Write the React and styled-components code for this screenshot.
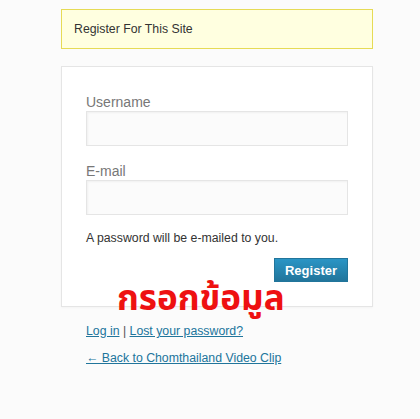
import React from 'react';
import styled, { createGlobalStyle } from 'styled-components';

const GlobalStyle = createGlobalStyle`
  html, body {
    margin: 0;
    padding: 0;
    background: #fbfbfb;
  }
  body {
    font-family: "Liberation Sans", Arial, sans-serif;
    color: #333;
  }
`;

const Page = styled.div`
  width: 420px;
  height: 419px;
  padding: 9px 0 0 61px;
  box-sizing: border-box;
  position: relative;
`;

const Wrapper = styled.div`
  width: 312px;
`;

const Message = styled.div`
  height: 40px;
  box-sizing: border-box;
  background: #ffffe0;
  border: 1px solid #e6db55;
  padding: 0 12px;
  display: flex;
  align-items: center;
  font-size: 12.3px;
  color: #333;
`;

const FormBox = styled.form`
  margin-top: 17px;
  background: #fff;
  border: 1px solid #e5e5e5;
  box-shadow: 0 1px 2px rgba(0, 0, 0, 0.03);
  padding: 26px 24px 24px;
  box-sizing: border-box;
  display: flow-root;
`;

const Label = styled.label`
  display: block;
  font-size: 14px;
  line-height: 18px;
  color: #777;
  margin-top: ${p => (p.$first ? '0' : '16px')};
`;

const Input = styled.input`
  display: block;
  width: 100%;
  height: 35px;
  box-sizing: border-box;
  background: #fbfbfb;
  border: 1px solid #e5e5e5;
  box-shadow: inset 1px 1px 2px rgba(200, 200, 200, 0.2);
  margin: 0;
  font-size: 20px;
`;

const Note = styled.p`
  margin: 15px 0 0;
  font-size: 12.3px;
  line-height: 16px;
  color: #333;
`;

const Submit = styled.div`
  display: flex;
  justify-content: flex-end;
  margin-top: 12px;
`;

const Button = styled.button`
  width: 74px;
  height: 24px;
  padding: 0;
  border: 1px solid #21759b;
  border-radius: 0;
  background: linear-gradient(to bottom, #2a95c5, #21759b);
  color: #fff;
  font-family: "Liberation Sans", Arial, sans-serif;
  font-size: 13px;
  font-weight: bold;
  cursor: pointer;
`;

const Nav = styled.p`
  margin: ${p => (p.$first ? '16px' : '11px')} 0 0 25px;
  font-size: 12.3px;
  line-height: 16px;
  color: #555;
`;

const Link = styled.a`
  color: #21759b;
  text-decoration: underline;
`;

const Stamp = styled.div`
  position: absolute;
  left: 117px;
  top: 282px;
  font-family: "Noto Sans Thai", "Tahoma", "Loma", "Garuda", sans-serif;
  font-size: 35px;
  font-weight: bold;
  color: #ee1111;
  line-height: 35px;
`;

export default function App() {
  return (
    <>
      <GlobalStyle />
      <Page>
        <Wrapper>
          <Message>Register For This Site</Message>
          <FormBox onSubmit={e => e.preventDefault()}>
            <Label $first>Username</Label>
            <Input type="text" />
            <Label>E-mail</Label>
            <Input type="email" />
            <Note>A password will be e-mailed to you.</Note>
            <Submit>
              <Button type="submit">Register</Button>
            </Submit>
          </FormBox>
        </Wrapper>
        <Nav $first>
          <Link href="#">Log in</Link> | <Link href="#">Lost your password?</Link>
        </Nav>
        <Nav>
          <Link href="#">← Back to Chomthailand Video Clip</Link>
        </Nav>
        <Stamp>กรอกข้อมูล</Stamp>
      </Page>
    </>
  );
}
